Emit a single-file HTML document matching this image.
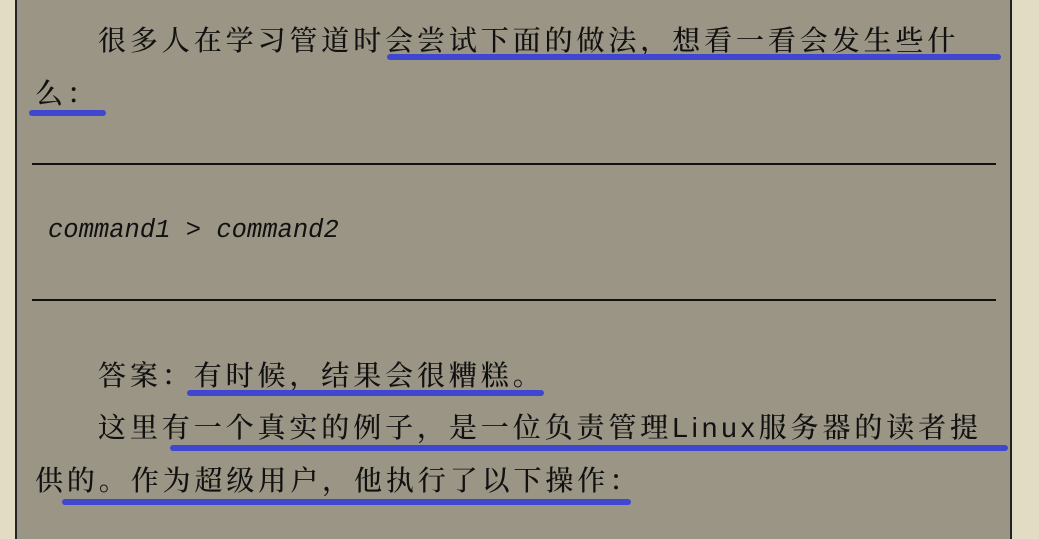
<!DOCTYPE html>
<html><head><meta charset="utf-8"><style>
body{margin:0;width:1039px;height:539px;overflow:hidden;background:#e2dcc4;position:relative}
.pg{position:absolute;left:15px;top:0;width:997px;height:539px;background:#9b9585;border-left:2px solid #222;border-right:2px solid #222;box-sizing:border-box}
.t{position:absolute;white-space:nowrap;font-family:"Liberation Sans","Noto Serif CJK SC",serif;font-size:28px;letter-spacing:3.9px;color:#111;line-height:1;font-weight:500}
.hr{position:absolute;left:32px;width:964px;height:2px;background:#111}
.u{position:absolute;height:6px;border-radius:3px;background:#4047cf}
.c{position:absolute;left:48px;top:216px;font-family:"Liberation Mono",monospace;font-style:italic;font-size:25.5px;color:#111}
</style></head><body>
<div class="pg"></div>
<div class="t" style="left:98px;top:27px">很多人在学习管道时会尝试下面的做法，想看一看会发生些什</div>
<div class="t" style="left:35px;top:80px">么：</div>
<div class="hr" style="top:163px"></div>
<div class="c">command1 &gt; command2</div>
<div class="hr" style="top:299px"></div>
<div class="t" style="left:98px;top:362px">答案：有时候，结果会很糟糕。</div>
<div class="t" style="left:98px;top:414px">这里有一个真实的例子，是一位负责管理Linux服务器的读者提</div>
<div class="t" style="left:35px;top:467px">供的。作为超级用户，他执行了以下操作：</div>
<div class="u" style="left:387px;top:54px;width:614px"></div>
<div class="u" style="left:29px;top:110px;width:77px"></div>
<div class="u" style="left:187px;top:390px;width:357px"></div>
<div class="u" style="left:170px;top:445px;width:838px"></div>
<div class="u" style="left:62px;top:499px;width:569px"></div>
</body></html>
